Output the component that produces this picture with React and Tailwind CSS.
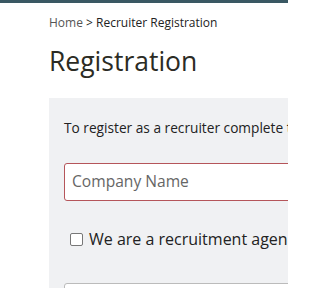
import React from "react";

export default function App() {
  return (
    <div className="w-[288px] h-[288px] overflow-hidden bg-white border-t-[3px] border-[#3a5863]" style={{ fontFamily: '"Open Sans", sans-serif' }}>
      <div className="pl-[49px]">
        {/* Breadcrumb */}
        <div className="pt-[11px] text-[12px] leading-[18px] whitespace-nowrap">
          <span className="text-[#555]">Home</span>
          <span className="text-[#222]"> &gt; Recruiter Registration</span>
        </div>

        <h1 className="mt-[13px] text-[26.5px] leading-[32px] text-[#2b2b24] whitespace-nowrap">Registration</h1>

        {/* Form panel */}
        <div className="mt-[21px] bg-[#f0f1f3] pl-[15px] pt-[20px] pb-6">
          <p className="text-[13.7px] leading-[20px] text-[#222] whitespace-nowrap">
            To register as a recruiter complete the form below.
          </p>

          <div className="mt-[25px] h-[38px] w-[300px] bg-white border border-[#b5555a] rounded-[3px] flex items-center pl-[7px]">
            <span className="text-[15.6px] text-[#666] whitespace-nowrap">Company Name</span>
          </div>

          <label className="mt-[27px] flex items-center gap-[6px] pl-[6px] whitespace-nowrap">
            <span className="w-[13px] h-[13px] border border-[#777] rounded-[2px] bg-white shrink-0" />
            <span className="text-[16px] leading-[22px] text-[#222]">We are a recruitment agency</span>
          </label>

          <div className="mt-[33px] h-[38px] w-[300px] bg-white border border-[#bbb] rounded-[3px]" />
        </div>
      </div>
    </div>
  );
}
